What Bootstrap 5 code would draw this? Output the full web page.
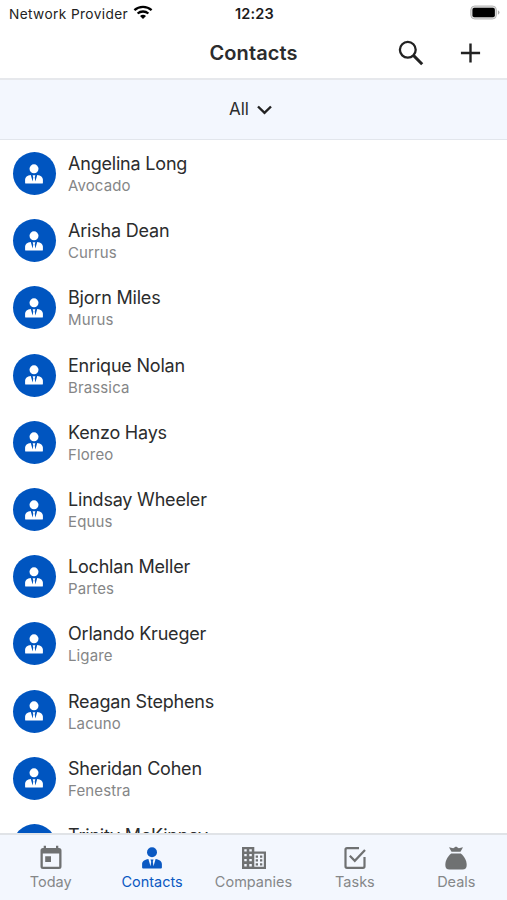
<!DOCTYPE html>
<html lang="en">
<head>
<meta charset="utf-8">
<meta name="viewport" content="width=device-width, initial-scale=1">
<title>Contacts</title>
<link rel="stylesheet" href="https://cdn.jsdelivr.net/npm/bootstrap@5.3.0/dist/css/bootstrap.min.css">
<style>
body{font-family:Inter,"Liberation Sans",sans-serif;color:#2b2c2d;background:#fff}
svg{display:block;flex:none}
.app{height:900px}
.statusbar{height:28px;padding:0 7px 0 9px;font-size:13.7px;line-height:28px;color:#222}
.carrier{letter-spacing:.38px}
.wifi{margin:-3px 0 0 1px}
.clock{font-size:14.5px;font-weight:600;letter-spacing:.2px;color:#1c1c1c}
.side{flex:1 1 0;min-width:0}
.titlebar{height:50px;padding:0 25px 0}
.titlebar h1{font-size:20px;font-weight:600;line-height:48px;letter-spacing:.1px}
.plus{margin-left:35px}
.filterbar{height:62px;background:#f3f7fe;border-top:2px solid #e6e8ec;border-bottom:1px solid #e2e6ec;font-size:17px;padding-right:6px}
.people{flex:1 1 0;min-height:0}
.person{height:67.2px;padding:0 13px;gap:12px}
.avatar{width:43px;height:43px;background:#0055c0;color:#fff}
.avatar svg{margin-right:1px}
.person-name{font-size:18px;line-height:22px;letter-spacing:-.2px;padding-top:2px}
.person-org{font-size:15px;line-height:21px;color:#858687;letter-spacing:.13px}
.tabs{height:67px;background:#f3f7fe;border-top:2px solid #e0e3e7}
.tab{flex:1 1 0;color:#858789;font-size:14.5px;line-height:20px;padding-top:10px;text-decoration:none}
.tab svg{color:#6f7172;margin-bottom:2px}
.tab.active,.tab.active svg{color:#0b59c2}
</style>
<script src="https://cdn.jsdelivr.net/npm/bootstrap@5.3.0/dist/js/bootstrap.bundle.min.js"></script>
</head>
<body>
<svg width="0" height="0" class="position-absolute" aria-hidden="true">
  <symbol id="person" viewBox="0 0 20 22">
    <circle cx="10" cy="5.3" r="5" fill="currentColor"/>
    <path fill="currentColor" d="M6.4 12 8.5 19.3 9.2 14.8 8.5 12.5H11.5L10.8 14.8 11.5 19.3 13.6 12C17.6 12.7 19.9 14.2 19.9 17.2V20.6Q19.9 21.6 18.9 21.6H1.1Q.1 21.6.1 20.6V17.2C.1 14.2 2.4 12.7 6.4 12Z"/>
  </symbol>
</svg>
<div class="app d-flex flex-column overflow-hidden">
  <header>
    <div class="statusbar d-flex align-items-center">
      <div class="side d-flex align-items-center gap-1">
        <span class="carrier text-nowrap">Network Provider</span>
        <svg class="wifi" width="20" height="15" viewBox="0 0 20 15" fill="none" stroke="#000" stroke-width="2.3"><path d="M1.4 5.1C6.2.8 13.8.8 18.6 5.1M4.6 8.5C7.7 5.8 12.3 5.8 15.4 8.5"/><path d="M7 10.9Q10 8.5 13 10.9L10 14Z" fill="#000" stroke="none"/></svg>
      </div>
      <span class="clock">12:23</span>
      <div class="side d-flex justify-content-end">
        <svg class="mb-1" width="30" height="15" viewBox="0 0 31 15"><rect x=".8" y=".8" width="26.5" height="13.4" rx="4" fill="#ddd" stroke="#b5b5b5" stroke-width="1"/><rect x="2.5" y="2.6" width="23.2" height="9.8" rx="2" fill="#000"/><path d="M28.8 5.2Q30.5 6 30.5 7.5T28.8 9.8Z" fill="#aaa"/></svg>
      </div>
    </div>
    <div class="titlebar d-flex align-items-center">
      <div class="side"></div>
      <h1 class="m-0">Contacts</h1>
      <div class="side d-flex justify-content-end align-items-center">
        <svg width="26" height="26" viewBox="0 0 26 26" fill="none" stroke="#222" stroke-width="2.3"><circle cx="9.8" cy="9.8" r="7.9"/><path d="m15.4 15.4 8.8 8.8" stroke-width="3"/></svg>
        <svg class="plus" width="23" height="24" viewBox="0 0 24 24" stroke="#222" stroke-width="2.5"><path d="M2 12H22M12 2V22"/></svg>
      </div>
    </div>
    <div class="filterbar d-flex justify-content-center align-items-center gap-2">
      <span>All</span>
      <svg width="15" height="10" viewBox="0 0 15 10" fill="none" stroke="#222" stroke-width="2.4"><path d="m1 1.5 6.5 6.4L14 1.5"/></svg>
    </div>
  </header>
  <main class="people overflow-hidden" id="people"></main>
  <nav class="tabs d-flex">
    <a class="tab d-flex flex-column align-items-center" href="#">
      <svg width="24" height="25" viewBox="0 0 24 25"><path fill="currentColor" fill-rule="evenodd" d="M4.7.8H7V3H17V.8H19.3V3H20Q22.5 3 22.5 5.5V21.5Q22.5 24 20 24H4Q1.5 24 1.5 21.5V5.5Q1.5 3 4 3H4.7ZM3.8 8.5V21.7H20.2V8.5ZM6.2 11.2H12V17H6.2Z"/></svg>
      <span>Today</span></a>
    <a class="tab active d-flex flex-column align-items-center" href="#">
      <svg width="24" height="25" viewBox="0 0 24 25"><use href="#person" x="2" y="2" width="20" height="22"/></svg>
      <span>Contacts</span></a>
    <a class="tab d-flex flex-column align-items-center" href="#">
      <svg width="26" height="25" viewBox="0 0 26 25"><path fill="currentColor" fill-rule="evenodd" d="M1 2H13.3V6.5H25V24H1ZM3.3 4.3V6.5H5.7V4.3ZM8.3 4.3V6.5H10.8V4.3ZM3.3 9V11.3H5.7V9ZM8.3 9V11.3H10.8V9ZM3.3 14V16.3H5.7V14ZM8.3 14V16.3H10.8V14ZM3.3 19V21.5H5.7V19ZM8.3 19V21.5H10.8V19ZM13.3 8.8V21.8H22.8V8.8Z"/><path fill="currentColor" d="M14.7 10.5H17V12.8H14.7ZM19 10.5H21.3V12.8H19ZM14.7 14.3H17V16.5H14.7ZM19 14.3H21.3V16.5H19ZM14.7 18.2H17V20.4H14.7ZM19 18.2H21.3V20.4H19Z"/></svg>
      <span>Companies</span></a>
    <a class="tab d-flex flex-column align-items-center" href="#">
      <svg width="24" height="25" viewBox="0 0 24 25" fill="none" stroke="currentColor" stroke-width="2.2"><path d="M16 3.2H4Q2.5 3.2 2.5 4.7V21.3Q2.5 22.8 4 22.8H20Q21.5 22.8 21.5 21.3V12"/><path d="m6.8 10.8 5 5L22 5"/></svg>
      <span>Tasks</span></a>
    <a class="tab d-flex flex-column align-items-center" href="#">
      <svg width="24" height="25" viewBox="0 0 24 25" fill="currentColor"><path d="M5 2.2 9.2 3.2 12 1.4 14.8 3.2 19 2.2 16.5 6.8H7.5Z"/><path d="M7.2 8.6H16.8C20 11 22.7 15.4 22.7 20Q22.7 24.5 18.5 24.5H5.5Q1.3 24.5 1.3 20C1.3 15.4 4 11 7.2 8.6Z"/></svg>
      <span>Deals</span></a>
  </nav>
</div>
<script>
const contacts = [
  ["Angelina Long","Avocado"],["Arisha Dean","Currus"],["Bjorn Miles","Murus"],
  ["Enrique Nolan","Brassica"],["Kenzo Hays","Floreo"],["Lindsay Wheeler","Equus"],
  ["Lochlan Meller","Partes"],["Orlando Krueger","Ligare"],["Reagan Stephens","Lacuno"],
  ["Sheridan Cohen","Fenestra"],["Trinity McKinney",""]
];
document.getElementById("people").innerHTML = contacts.map(([name, org]) => `
  <div class="person d-flex align-items-center">
    <div class="avatar rounded-circle d-flex flex-shrink-0 align-items-center justify-content-center">
      <svg width="18" height="20"><use href="#person"/></svg>
    </div>
    <div><div class="person-name">${name}</div><div class="person-org">${org || "&nbsp;"}</div></div>
  </div>`).join("");
</script>
</body>
</html>
